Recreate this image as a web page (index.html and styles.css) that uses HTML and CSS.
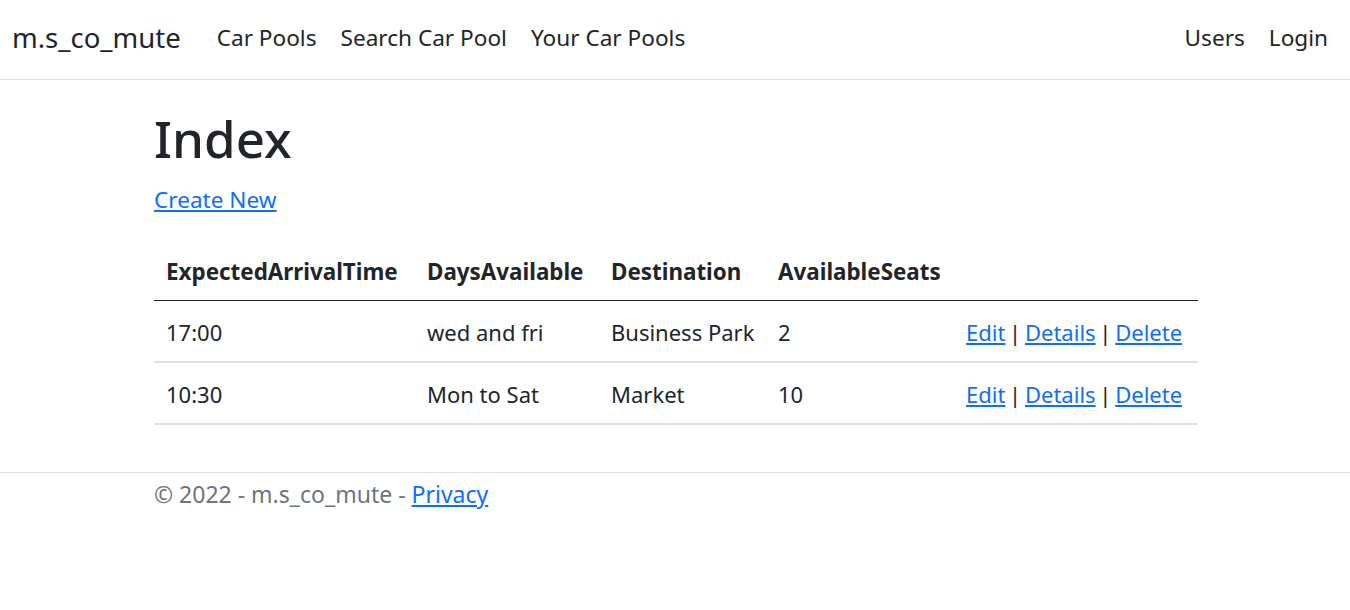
FILE: index.html
```html
<!DOCTYPE html>
<html lang="en">
<head>
<meta charset="utf-8">
<title>Index - m.s_co_mute</title>
<link rel="stylesheet" href="styles.css">
</head>
<body>
<header class="navbar">
  <a class="brand" href="#">m.s_co_mute</a>
  <nav class="nav-left">
    <a class="nav-link" href="#">Car Pools</a>
    <a class="nav-link" href="#">Search Car Pool</a>
    <a class="nav-link" href="#">Your Car Pools</a>
  </nav>
  <nav class="nav-right">
    <a class="nav-link" href="#">Users</a>
    <a class="nav-link" href="#">Login</a>
  </nav>
</header>
<main class="container">
  <h1 class="title">Index</h1>
  <p class="create"><a href="#">Create New</a></p>
  <table class="table">
    <colgroup>
      <col class="c1"><col class="c2"><col class="c3"><col class="c4"><col class="c5">
    </colgroup>
    <thead>
      <tr>
        <th>ExpectedArrivalTime</th>
        <th>DaysAvailable</th>
        <th>Destination</th>
        <th>AvailableSeats</th>
        <th></th>
      </tr>
    </thead>
    <tbody>
      <tr>
        <td>17:00</td>
        <td>wed and fri</td>
        <td>Business Park</td>
        <td>2</td>
        <td class="actions"><a href="#">Edit</a> | <a href="#">Details</a> | <a href="#">Delete</a></td>
      </tr>
      <tr>
        <td>10:30</td>
        <td>Mon to Sat</td>
        <td>Market</td>
        <td>10</td>
        <td class="actions"><a href="#">Edit</a> | <a href="#">Details</a> | <a href="#">Delete</a></td>
      </tr>
    </tbody>
  </table>
</main>
<footer class="footer">
  <div class="container footer-inner">&copy; 2022 - m.s_co_mute - <a href="#">Privacy</a></div>
</footer>
</body>
</html>
```
FILE: styles.css
```css
* { box-sizing: border-box; }
html, body { margin: 0; padding: 0; }
body {
  font-family: "Noto Sans", "Open Sans", sans-serif;
  font-size: 22px;
  line-height: 1.5;
  color: #212529;
  background: #fff;
}
a { color: #0d6efd; }

.navbar {
  display: flex;
  align-items: center;
  height: 80px;
  padding: 0 10px 4px 12px;
  border-bottom: 1px solid #e3e3e3;
}
.brand {
  color: #212529;
  text-decoration: none;
  font-size: 27.5px;
  margin-right: 24px;
}
.nav-left, .nav-right { display: flex; }
.nav-right { margin-left: auto; }
.nav-link {
  color: #212529;
  text-decoration: none;
  padding: 0 12px;
  font-size: 22.6px;
}

.container {
  width: 1046px;
  padding-left: 2px;
  margin: 0 auto;
}
.title {
  font-size: 51px;
  font-weight: 500;
  line-height: 1.2;
  margin: 28px 0 14px;
}
.create { margin: 0 0 24px; font-size: 22.6px; }

.table {
  width: 100%;
  border-collapse: collapse;
  table-layout: fixed;
}
.c1 { width: 261px; }
.c2 { width: 184px; }
.c3 { width: 167px; }
.c4 { width: 188px; }
.c5 { width: 244px; }
.table th, .table td {
  text-align: left;
  padding: 15px 12px 12px;
  white-space: nowrap;
  border-bottom: 2px solid #dee2e6;
}
.table th {
  font-weight: 700;
  font-size: 22.4px;
  border-bottom: 1px solid #212529;
  padding-top: 14px;
  padding-bottom: 11px;
}
.table td.actions { word-spacing: -2px; }

.footer {
  margin-top: 47px;
  border-top: 1px solid #e3e3e3;
  color: #6c757d;
  font-size: 23px;
}
.footer-inner { padding-top: 4px; }
```
